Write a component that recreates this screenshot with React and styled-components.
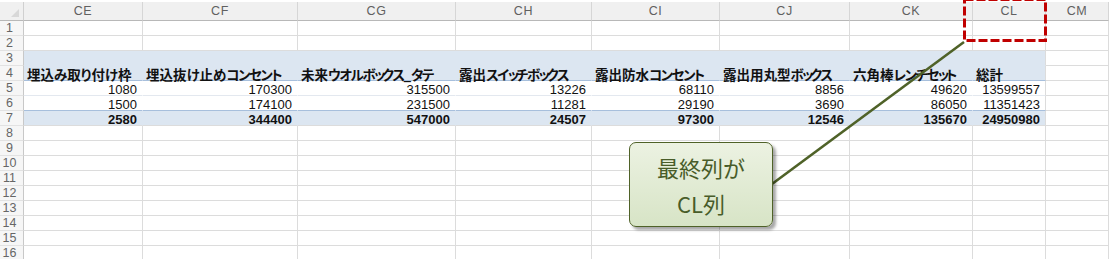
import styled, { createGlobalStyle } from "styled-components";

const GlobalStyle = createGlobalStyle`
  html, body {
    margin: 0;
    padding: 0;
    background: #ffffff;
  }
  body {
    width: 1109px;
    height: 259px;
    overflow: hidden;
  }
`;

const columns = ["CE", "CF", "CG", "CH", "CI", "CJ", "CK", "CL", "CM"];
const pivotCols = 8;

const headers = [
  "埋込み取り付け枠",
  "埋込抜け止めコンセント",
  "未来ウオルボックス_タテ",
  "露出スイッチボックス",
  "露出防水コンセント",
  "露出用丸型ボックス",
  "六角棒レンチセット",
  "総計",
];
const row5 = [1080, 170300, 315500, 13226, 68110, 8856, 49620, 13599557];
const row6 = [1500, 174100, 231500, 11281, 29190, 3690, 86050, 11351423];
const totals = [2580, 344400, 547000, 24507, 97300, 12546, 135670, 24950980];

// pivot row styles: background + bottom line colour
const pivotRows = {
  3: { bg: "#dce6f1", line: "#dce6f1" },
  4: { bg: "#dce6f1", line: "#a7bfdc" },
  5: { bg: "#ffffff", line: "#e3e8ef" },
  6: { bg: "#ffffff", line: "#a7bfdc" },
  7: { bg: "#dce6f1", line: "#dcdcdc" },
};

// katakana is set tighter (small kana most), like the proportional gothic in Excel
function HeaderText({ text }) {
  return [...text].map((ch, i) => {
    if (/[ァィゥェォッャュョ]/.test(ch)) return <Kana key={i} $small>{ch}</Kana>;
    if (/[\u30A0-\u30FF]/.test(ch)) return <Kana key={i}>{ch}</Kana>;
    return ch;
  });
}

export default function App() {
  const rows = [];
  for (let r = 1; r <= 16; r++) {
    const pivot = pivotRows[r];
    rows.push(<RowNum key={`n${r}`}>{r}</RowNum>);
    for (let c = 0; c < columns.length; c++) {
      const inPivot = pivot && c < pivotCols;
      let content = null;
      let align = "left";
      let bold = false;
      if (r === 4 && c < pivotCols) {
        content = <HeaderText text={headers[c]} />;
        bold = true;
      } else if (r === 5 && c < pivotCols) {
        content = row5[c];
        align = "right";
      } else if (r === 6 && c < pivotCols) {
        content = row6[c];
        align = "right";
      } else if (r === 7 && c < pivotCols) {
        content = totals[c];
        align = "right";
        bold = true;
      }
      rows.push(
        <Cell
          key={`${r}-${c}`}
          $bg={inPivot ? pivot.bg : "#ffffff"}
          $line={inPivot ? pivot.line : "#dcdcdc"}
          $side={inPivot && c < pivotCols - 1 ? pivot.bg : "#dcdcdc"}
          $align={align}
          $bold={bold}
          $jp={r === 4}
        >
          {content}
        </Cell>
      );
    }
  }

  return (
    <Page>
      <GlobalStyle />
      <Sheet>
        <Corner>
          <CornerTriangle />
        </Corner>
        {columns.map((col) => (
          <ColHead key={col}>{col}</ColHead>
        ))}
        {rows}
      </Sheet>

      <Overlay width="1109" height="259" viewBox="0 0 1109 259">
        <line
          x1="772"
          y1="184"
          x2="964"
          y2="42"
          stroke="#4f6228"
          strokeWidth="2.6"
        />
        <rect
          x="964.5"
          y="-0.5"
          width="81"
          height="41"
          fill="none"
          stroke="#c00000"
          strokeWidth="3"
          strokeDasharray="9 3"
        />
      </Overlay>

      <Callout>
        <CalloutLine>最終列が</CalloutLine>
        <CalloutLine>CL列</CalloutLine>
      </Callout>
    </Page>
  );
}

const Page = styled.div`
  position: relative;
  width: 1109px;
  height: 259px;
  overflow: hidden;
  background: #ffffff;
  padding-top: 2px;
  box-sizing: border-box;
`;

const Sheet = styled.div`
  display: grid;
  grid-template-columns: 24px 119px 155px 158px 136px 128px 130px 123px 73px 1fr;
  grid-template-rows: 19px;
  grid-auto-rows: 15px;
  font-family: "Liberation Sans", "Noto Sans CJK JP", sans-serif;
`;

const Corner = styled.div`
  position: relative;
  background: #f0f0f0;
  border-right: 1px solid #d0d0d0;
  border-bottom: 1px solid #b8b8b8;
  box-sizing: border-box;
`;

const CornerTriangle = styled.div`
  position: absolute;
  right: 4px;
  bottom: 3px;
  width: 0;
  height: 0;
  border-left: 8px solid transparent;
  border-bottom: 8px solid #d8d8d8;
`;

const ColHead = styled.div`
  background: #f0f0f0;
  border-right: 1px solid #d6d6d6;
  border-bottom: 1px solid #b8b8b8;
  box-sizing: border-box;
  color: #606060;
  font-size: 12.5px;
  line-height: 19px;
  text-align: center;
  letter-spacing: 0.6px;
`;

const RowNum = styled.div`
  background: #f6f6f6;
  border-right: 1px solid #c8c8c8;
  border-bottom: 1px solid #e2e2e2;
  box-sizing: border-box;
  color: #666666;
  font-size: 12.5px;
  line-height: 15px;
  text-align: center;
  padding-right: 4px;
`;

const Cell = styled.div`
  position: relative;
  z-index: ${(p) => (p.$jp ? 1 : 0)};
  background: ${(p) => p.$bg};
  border-right: 1px solid ${(p) => p.$side};
  border-bottom: 1px solid ${(p) => p.$line};
  box-sizing: border-box;
  font-size: ${(p) => (p.$jp ? "13.5px" : "13px")};
  font-weight: ${(p) => (p.$bold ? 700 : 400)};
  font-family: ${(p) =>
    p.$jp
      ? `"Noto Sans CJK JP", sans-serif`
      : `"Liberation Sans", "Noto Sans CJK JP", sans-serif`};
  font-feature-settings: "palt";
  color: #111111;
  line-height: ${(p) => (p.$jp ? "13px" : "15px")};
  padding: ${(p) => (p.$jp ? "2px" : "1px")}
    ${(p) => (p.$align === "right" ? "5px" : "3px")} 0;
  text-align: ${(p) => p.$align};
  white-space: nowrap;
`;

const Kana = styled.span`
  letter-spacing: ${(p) => (p.$small ? "-3.5px" : "-1.5px")};
`;

const Overlay = styled.svg`
  position: absolute;
  left: 0;
  top: 0;
  z-index: 2;
  pointer-events: none;
`;

const Callout = styled.div`
  position: absolute;
  left: 629px;
  top: 142px;
  z-index: 3;
  width: 144px;
  height: 85px;
  box-sizing: border-box;
  border: 1.5px solid #4f6228;
  border-radius: 7px;
  background: linear-gradient(180deg, #ecf2e2 0%, #d7e4c6 100%);
  box-shadow: 3px 3px 3px rgba(0, 0, 0, 0.35);
  display: flex;
  flex-direction: column;
  justify-content: center;
  align-items: center;
`;

const CalloutLine = styled.div`
  font-family: "Noto Sans CJK JP", sans-serif;
  font-size: 22px;
  line-height: 36px;
  color: #485c29;
`;
